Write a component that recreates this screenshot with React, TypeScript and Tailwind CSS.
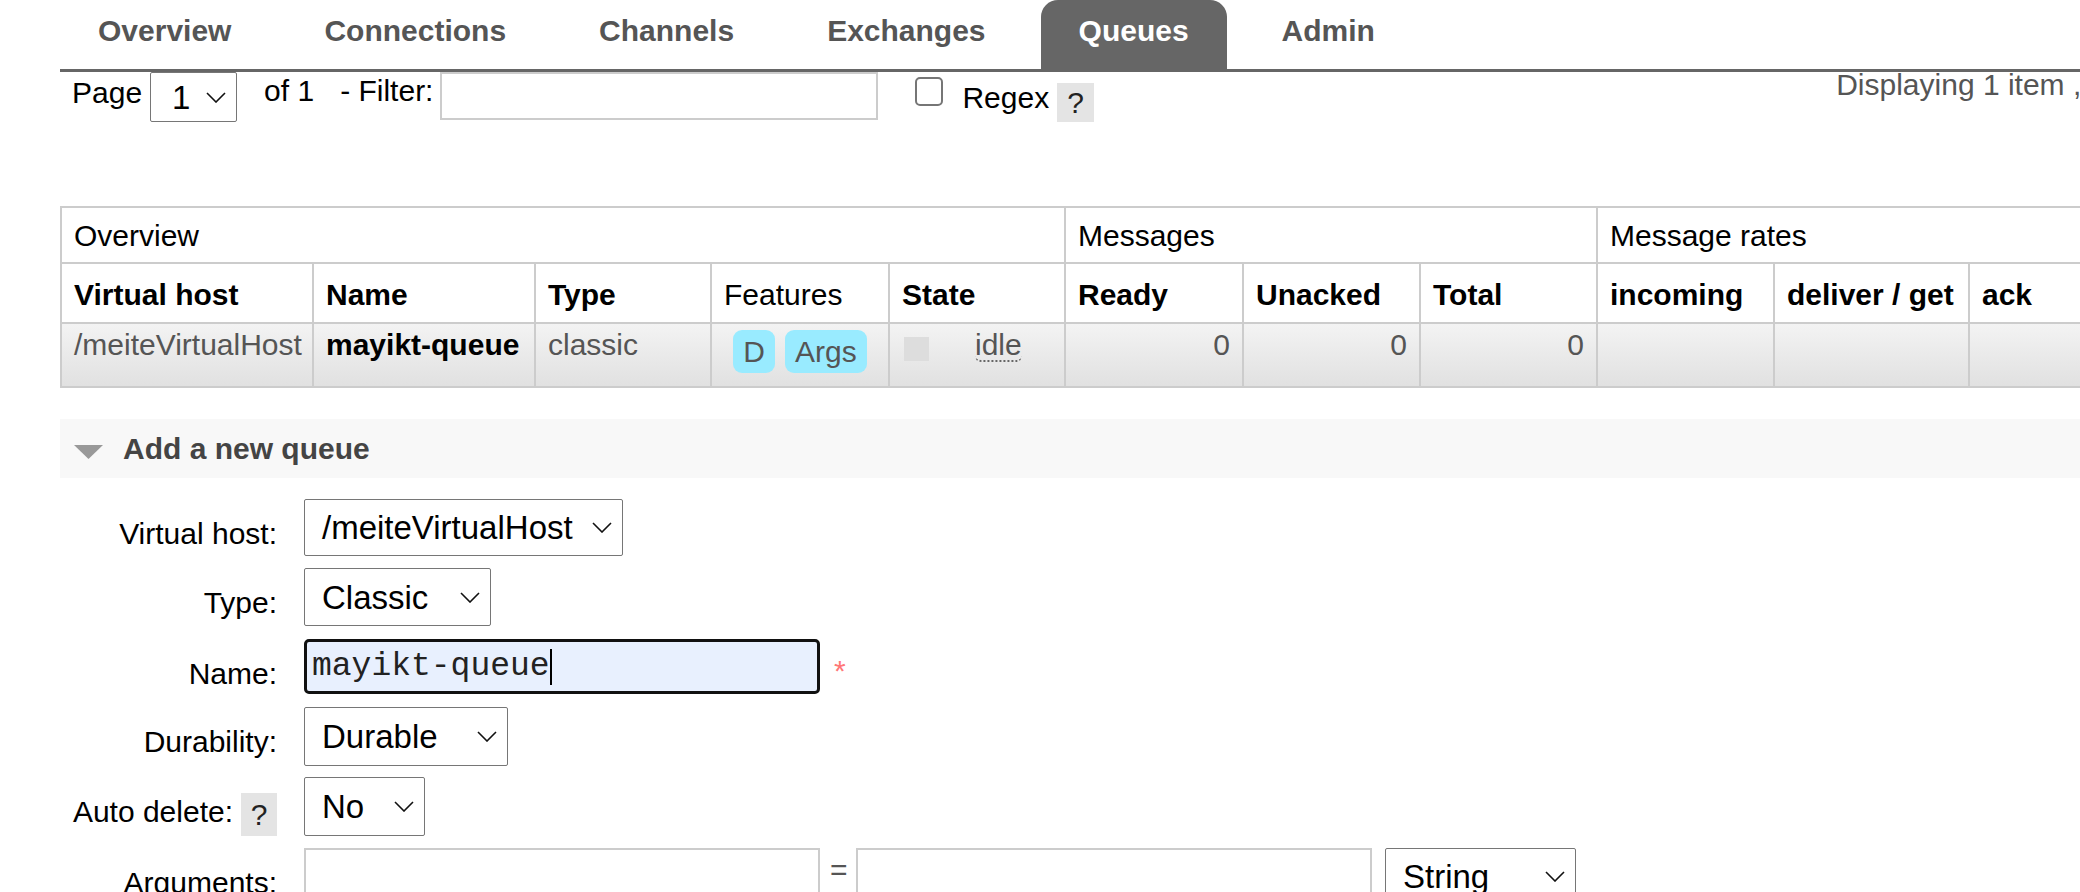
import React from 'react';

const tabs = ['Overview', 'Connections', 'Channels', 'Exchanges', 'Queues', 'Admin'];

function Chevron() {
  return (
    <svg width="20" height="11" viewBox="0 0 20 11" className="shrink-0">
      <polyline points="1,1 10,10 19,1" fill="none" stroke="#111" strokeWidth="1.6" />
    </svg>
  );
}

function Select({ value, className }: { value: string; className: string }) {
  return (
    <div
      className={`flex shrink-0 items-center justify-between rounded-[2px] border border-[#767676] bg-white pr-[10px] text-[33px] leading-none text-black ${className}`}
    >
      <span>{value}</span>
      <Chevron />
    </div>
  );
}

function Help({ className }: { className: string }) {
  return (
    <span className={`flex shrink-0 items-center justify-center bg-[#e4e4e4] text-[30px] text-[#222] ${className}`}>
      ?
    </span>
  );
}

const cell = 'border-r-2 border-b-2 border-[#ccc]';
const dataCell = `${cell} h-[64px] bg-linear-to-b from-[#f3f3f3] to-[#e1e1e1] pt-[6px] leading-[30px] text-[#555]`;
const headCell = `${cell} flex h-[60px] items-center pl-[12px] pt-[4px] font-bold leading-[36px]`;

export default function App() {
  return (
    <div className="h-[892px] w-[2080px] overflow-hidden bg-white font-['Liberation_Sans',Arial,sans-serif] text-[30px] text-black">
      <div className="pl-[60px]">
        {/* top tabs */}
        <ul className="flex h-[72px] border-b-[3px] border-[#666]">
          {tabs.map((tab) => (
            <li
              key={tab}
              className={`mr-[17px] h-[69px] shrink-0 px-[38px] pt-[13px] font-bold leading-[36px] ${
                tab === 'Queues' ? 'rounded-t-[17px] bg-[#666] text-white' : 'text-[#555]'
              }`}
            >
              {tab}
            </li>
          ))}
        </ul>

        {/* pagination / filter */}
        <div className="flex h-[134px] items-start whitespace-nowrap pl-[12px] leading-[36px]">
          <span className="mt-[3px] shrink-0">Page</span>
          <Select value="1" className="ml-[8px] h-[50px] w-[87px] pl-[21px]" />
          <span className="ml-[27px] mt-[1px] shrink-0">of 1</span>
          <span className="ml-[26px] mt-[1px] shrink-0">- Filter:</span>
          <div className="ml-[7px] h-[48px] w-[438px] shrink-0 border-2 border-[#ccc] bg-white" />
          <span className="ml-[37px] mt-[5px] h-[29px] w-[28px] shrink-0 rounded-[5px] border-2 border-[#767676] bg-white" />
          <span className="ml-[19px] mt-[8px] shrink-0">Regex</span>
          <Help className="ml-[8px] mt-[11px] h-[39px] w-[37px]" />
          <span className="-mt-[5px] ml-[742px] shrink-0 text-[#555]">Displaying 1 item , page size up to:</span>
        </div>

        {/* queue list */}
        <div className="grid w-max grid-cols-[252px_222px_176px_178px_176px_178px_177px_177px_177px_195px_200px] border-t-2 border-l-2 border-[#ccc] whitespace-nowrap">
          <div className={`${cell} col-span-5 flex h-[56px] items-center pl-[12px]`}>Overview</div>
          <div className={`${cell} col-span-3 flex h-[56px] items-center pl-[12px]`}>Messages</div>
          <div className={`${cell} col-span-3 flex h-[56px] items-center pl-[12px]`}>Message rates</div>

          <div className={headCell}>Virtual host</div>
          <div className={headCell}>Name</div>
          <div className={headCell}>Type</div>
          <div className={`${headCell} font-normal`}>Features</div>
          <div className={headCell}>State</div>
          <div className={headCell}>Ready</div>
          <div className={headCell}>Unacked</div>
          <div className={headCell}>Total</div>
          <div className={headCell}>incoming</div>
          <div className={headCell}>deliver / get</div>
          <div className={headCell}>ack</div>

          <div className={`${dataCell} pl-[12px]`}>/meiteVirtualHost</div>
          <div className={`${dataCell} pl-[12px] font-bold text-black`}>mayikt-queue</div>
          <div className={`${dataCell} pl-[12px]`}>classic</div>
          <div className={`${dataCell} flex justify-center gap-[10px]`}>
            <span className="flex h-[43px] items-center rounded-[9px] bg-[#99ebff] px-[10px]">D</span>
            <span className="flex h-[43px] items-center rounded-[9px] bg-[#99ebff] px-[10px]">Args</span>
          </div>
          <div className={`${dataCell} flex items-start pl-[14px]`}>
            <span className="mt-[7px] h-[24px] w-[25px] bg-[#ddd]" />
            <span className="ml-[46px] rounded-b-[6px] border-b-2 border-dotted border-[#666]">idle</span>
          </div>
          <div className={`${dataCell} pr-[12px] text-right`}>0</div>
          <div className={`${dataCell} pr-[12px] text-right`}>0</div>
          <div className={`${dataCell} pr-[12px] text-right`}>0</div>
          <div className={dataCell} />
          <div className={dataCell} />
          <div className={dataCell} />
        </div>

        {/* add a new queue */}
        <div className="mt-[31px] flex h-[59px] items-center bg-[#f8f8f8] pl-[14px]">
          <svg width="29" height="14" viewBox="0 0 29 14" className="mt-[7px] shrink-0">
            <polygon points="0,0 29,0 14.5,14" fill="#999" />
          </svg>
          <span className="ml-[20px] font-bold leading-[36px] text-[#444]">Add a new queue</span>
        </div>

        <div className="whitespace-nowrap leading-[36px]">
          <div className="mt-[21px] flex items-start">
            <span className="mt-[17px] w-[217px] shrink-0 text-right">Virtual host:</span>
            <Select value="/meiteVirtualHost" className="ml-[27px] h-[57px] w-[319px] pl-[17px]" />
          </div>

          <div className="mt-[12px] flex items-start">
            <span className="mt-[17px] w-[217px] shrink-0 text-right">Type:</span>
            <Select value="Classic" className="ml-[27px] h-[58px] w-[187px] pl-[17px]" />
          </div>

          <div className="mt-[13px] flex items-start">
            <span className="mt-[17px] w-[217px] shrink-0 text-right">Name:</span>
            <div className="ml-[27px] flex h-[55px] w-[516px] shrink-0 items-center rounded-[5px] border-[3px] border-[#111] bg-[#e8f0fe] pl-[5px] font-['Liberation_Mono',monospace] text-[33px] text-[#222]">
              <span>mayikt-queue</span>
              <span className="h-[36px] w-[2px] bg-black" />
            </div>
            <span className="ml-[14px] mt-[14px] text-[#f77]">*</span>
          </div>

          <div className="mt-[13px] flex items-start">
            <span className="mt-[17px] w-[217px] shrink-0 text-right">Durability:</span>
            <Select value="Durable" className="ml-[27px] h-[59px] w-[204px] pl-[17px]" />
          </div>

          <div className="mt-[11px] flex items-start">
            <div className="flex w-[217px] shrink-0 items-start justify-end">
              <span className="mt-[17px]">Auto delete:</span>
              <Help className="ml-[8px] mt-[16px] h-[43px] w-[36px]" />
            </div>
            <Select value="No" className="ml-[27px] h-[59px] w-[121px] pl-[17px]" />
          </div>

          <div className="mt-[12px] flex items-start">
            <span className="mt-[17px] w-[217px] shrink-0 text-right">Arguments:</span>
            <div className="ml-[27px] h-[57px] w-[516px] shrink-0 border-2 border-[#ccc] bg-white" />
            <span className="ml-[10px] mt-[4px] w-[16px] shrink-0 text-[#555]">=</span>
            <div className="ml-[10px] h-[57px] w-[516px] shrink-0 border-2 border-[#ccc] bg-white" />
            <Select value="String" className="ml-[13px] h-[57px] w-[191px] pl-[17px]" />
          </div>
        </div>
      </div>
    </div>
  );
}
